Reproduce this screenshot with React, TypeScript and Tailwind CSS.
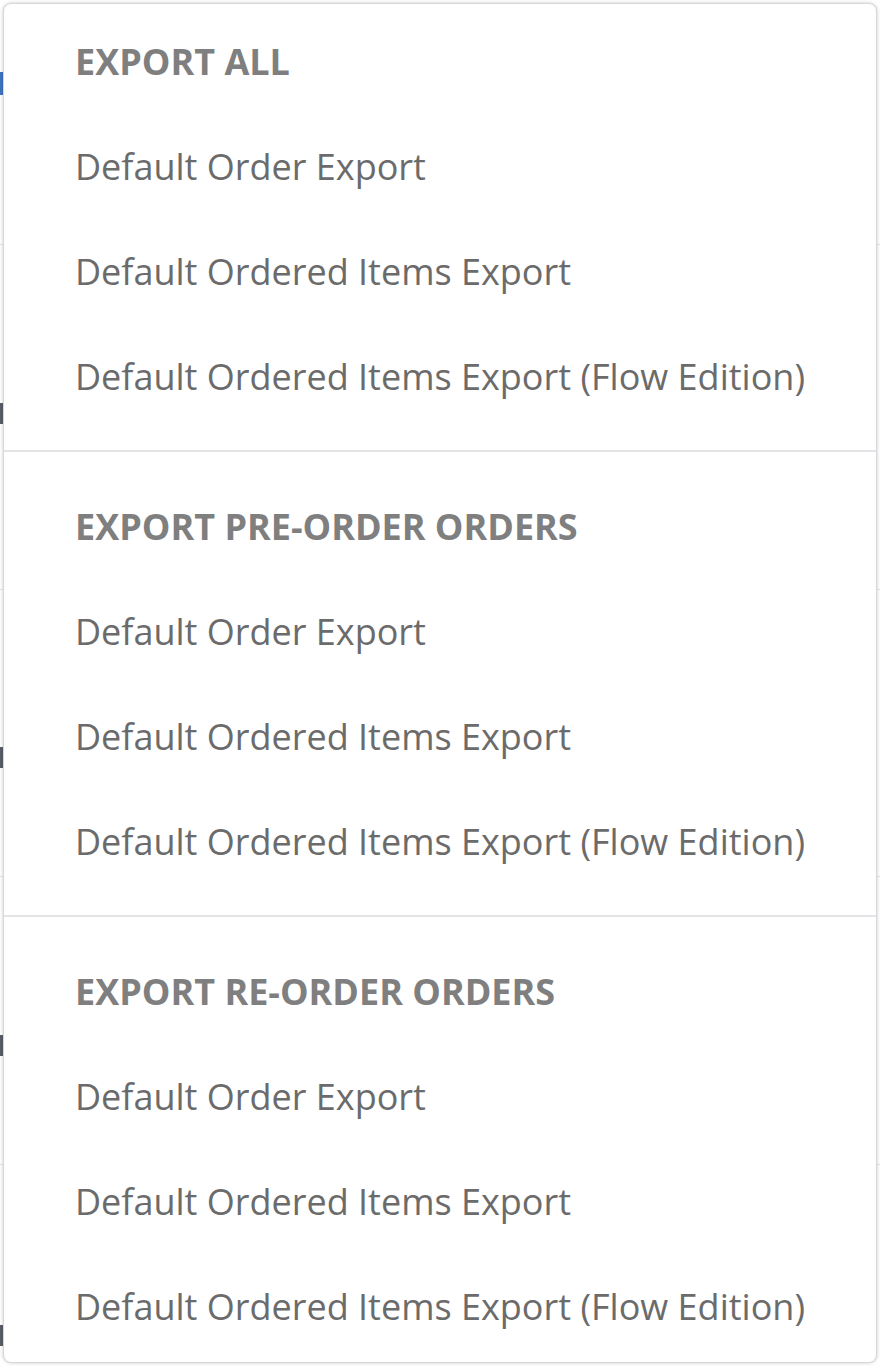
import React from "react";

const sections = ["EXPORT ALL", "EXPORT PRE-ORDER ORDERS", "EXPORT RE-ORDER ORDERS"];

const items = [
  "Default Order Export",
  "Default Ordered Items Export",
  "Default Ordered Items Export (Flow Edition)",
];

function BackgroundPage() {
  // the page behind the menu; only a thin strip of it shows on the left
  return (
    <div className="flex flex-col bg-white">
      <div className="h-[245px] border-b border-[#e6e6e9] pt-[72px]">
        <div className="h-[23px] w-[12px] bg-[#3d74c2]" />
      </div>
      <div className="h-[345px] border-b border-[#e6e6e9] pt-[158px]">
        <div className="h-[21px] w-[12px] bg-[#5a5e66]" />
      </div>
      <div className="h-[287px] border-b border-[#e6e6e9] pt-[157px]">
        <div className="h-[21px] w-[12px] bg-[#5a5e66]" />
      </div>
      <div className="h-[288px] border-b border-[#e6e6e9] pt-[158px]">
        <div className="h-[21px] w-[12px] bg-[#5a5e66]" />
      </div>
      <div className="h-[201px] pt-[160px]">
        <div className="h-[21px] w-[12px] bg-[#5a5e66]" />
      </div>
    </div>
  );
}

export default function App() {
  return (
    <div
      className="relative h-[1366px] w-[880px] overflow-hidden bg-white"
      style={{ fontFamily: '"Open Sans", "Noto Sans", sans-serif' }}
    >
      <BackgroundPage />
      <div className="absolute left-[3px] top-[3px] h-[1360px] w-[874px] overflow-hidden rounded-[8px] border border-[#d6d6db] bg-white shadow-[0_0_3px_1px_rgba(0,0,0,0.12)]">
        {sections.map((title, i) => (
          <div
            key={title}
            className={
              i === 0
                ? "flex flex-col pt-[5px] pb-[21px]"
                : "flex flex-col border-t-2 border-[#e4e4e6] pt-[22px] pb-[21px]"
            }
          >
            <div className="flex h-[105px] items-center pl-[71px] text-[36px] font-bold text-[#7f7f7f]">
              {title}
            </div>
            {items.map((it) => (
              <div
                key={it}
                className="flex h-[105px] items-center pl-[71px] text-[36px] text-[#6b6b6b]"
              >
                {it}
              </div>
            ))}
          </div>
        ))}
      </div>
    </div>
  );
}
